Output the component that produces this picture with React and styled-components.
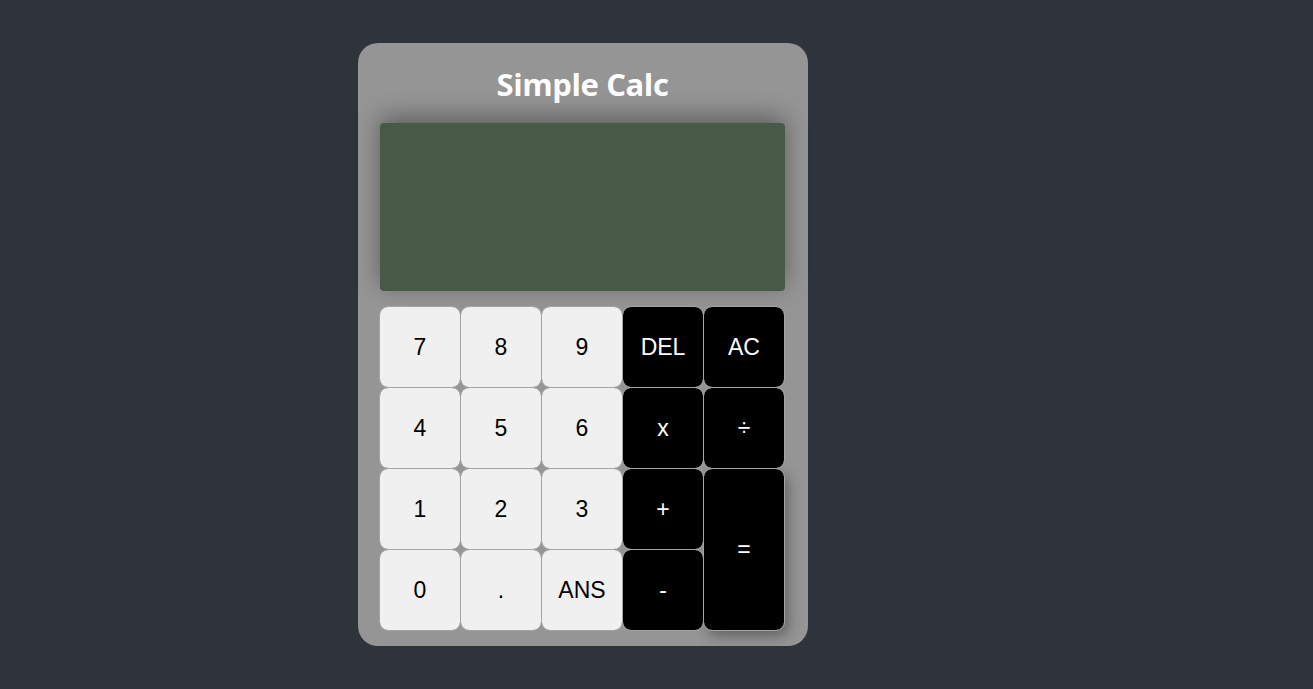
import React from "react";
import styled, { createGlobalStyle } from "styled-components";

const GlobalStyle = createGlobalStyle`
  body {
    margin: 0;
    background: #2e333c;
    font-family: "Liberation Sans", Arial, sans-serif;
  }
`;

const Page = styled.div`
  min-height: 689px;
  padding: 43px 0 0 358px;
  box-sizing: border-box;
`;

const Calculator = styled.div`
  width: 450px;
  height: 603px;
  box-sizing: border-box;
  background: #959595;
  border-radius: 20px;
  padding: 22px 23px 16px 22px;
  display: flex;
  flex-direction: column;
`;

const Title = styled.h1`
  margin: 0;
  height: 58px;
  text-align: center;
  color: #ffffff;
  font-family: "Open Sans", sans-serif;
  font-size: 31px;
  font-weight: 700;
  letter-spacing: -0.4px;
  line-height: 38px;
`;

const Display = styled.div`
  height: 168px;
  background: #475a47;
  border-radius: 4px;
  box-shadow: 0 -6px 24px rgba(0, 0, 0, 0.38);
  margin-bottom: 16px;
`;

const Keys = styled.div`
  display: grid;
  grid-template-columns: repeat(5, 80px);
  grid-template-rows: repeat(4, 80px);
  gap: 1px;
`;

const Key = styled.button`
  margin: 0;
  padding: 0;
  border: none;
  border-radius: 8px;
  outline: 1px solid #a4a4a4;
  background: ${(p) => (p.$dark ? "#000000" : "#f0f0f0")};
  color: ${(p) => (p.$dark ? "#ffffff" : "#000000")};
  font-family: "Liberation Sans", Arial, sans-serif;
  font-size: 23px;
  cursor: pointer;
  grid-row: ${(p) => (p.$tall ? "span 2" : "auto")};
  box-shadow: ${(p) => (p.$tall ? "4px 6px 14px rgba(0,0,0,0.35)" : "none")};
`;

const keys = [
  ["7"], ["8"], ["9"], ["DEL", true], ["AC", true],
  ["4"], ["5"], ["6"], ["x", true], ["÷", true],
  ["1"], ["2"], ["3"], ["+", true], ["=", true, true],
  ["0"], ["."], ["ANS"], ["-", true],
];

export default function App() {
  return (
    <Page>
      <GlobalStyle />
      <Calculator>
        <Title>Simple Calc</Title>
        <Display />
        <Keys>
          {keys.map(([label, dark, tall]) => (
            <Key key={label} $dark={dark} $tall={tall}>
              {label}
            </Key>
          ))}
        </Keys>
      </Calculator>
    </Page>
  );
}
